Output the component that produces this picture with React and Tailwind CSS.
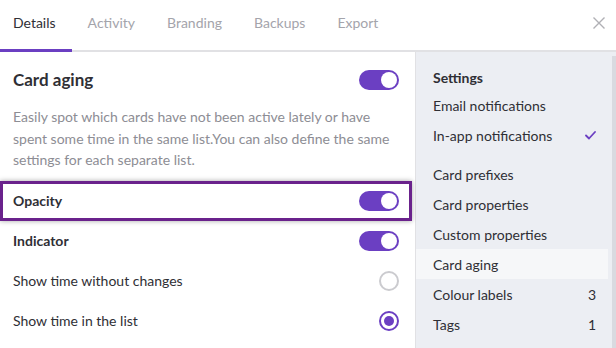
import { useState } from 'react';

const tabs = ['Details', 'Activity', 'Branding', 'Backups', 'Export'];

const menu = [
    { label: 'Email notifications' },
    { label: 'In-app notifications', check: true },
    { label: 'Card prefixes', gap: true },
    { label: 'Card properties' },
    { label: 'Custom properties' },
    { label: 'Card aging', active: true },
    { label: 'Colour labels', count: 3 },
    { label: 'Tags', count: 1 },
];

const Toggle = ({ on, onClick }) => (
    <button
        onClick={onClick}
        className={`w-[40px] h-[20px] rounded-full flex items-center px-[2px] shrink-0 ${on ? 'bg-[#6b3fc2] justify-end' : 'bg-[#cfcfd6] justify-start'}`}
    >
        <span className="w-[16px] h-[16px] rounded-full bg-white block" />
    </button>
);

const Radio = ({ on, onClick }) => (
    <button
        onClick={onClick}
        className={`w-[20px] h-[20px] rounded-full border-2 flex items-center justify-center shrink-0 ${on ? 'border-[#6b3fc2]' : 'border-[#cbcbcf]'}`}
    >
        {on && <span className="w-[10px] h-[10px] rounded-full bg-[#6b3fc2] block" />}
    </button>
);

const App = () => {
    const [aging, setAging] = useState(true);
    const [opacity, setOpacity] = useState(true);
    const [indicator, setIndicator] = useState(true);
    const [mode, setMode] = useState('list');

    return (
        <div className="w-[616px] h-[348px] bg-white overflow-hidden flex flex-col text-[#2f2f35]" style={{ fontFamily: 'Lato, "Open Sans", sans-serif' }}>
            {/* tabs */}
            <div className="flex items-end h-[52px] border-b-2 border-[#e1e1e4] shrink-0">
                {tabs.map((t, i) => (
                    <div
                        key={t}
                        className={`h-[52px] pt-[13px] text-[14px] leading-[20px] -mb-[2px] ${i === 0 ? 'pl-[13px] pr-[16px] border-b-[3px] border-[#6b3fc2] text-[#2f2f35]' : 'px-[16px] text-[#a4a4ab]'}`}
                    >
                        {t}
                    </div>
                ))}
                <div className="flex-1" />
                <button className="self-start mt-[17px] mr-[11px] text-[#b0b0b5]">
                    <svg width="12" height="12" viewBox="0 0 12 12" stroke="currentColor" strokeWidth="1.4" fill="none">
                        <path d="M0.5 0.5 L11.5 11.5 M11.5 0.5 L0.5 11.5" />
                    </svg>
                </button>
            </div>

            <div className="flex flex-1 min-h-0">
                {/* main panel */}
                <div className="w-[416px] shrink-0 border-r border-[#e1e1e4] pt-[18px]">
                    <div className="flex items-center justify-between pl-[13px] pr-[16px] h-[20px]">
                        <h2 className="text-[17px] font-bold leading-[20px]">Card aging</h2>
                        <Toggle on={aging} onClick={() => setAging(!aging)} />
                    </div>
                    <p className="mt-[16px] pl-[13px] pr-[16px] text-[14px] leading-[21.5px] text-[#8d8d94]">
                        Easily spot which cards have not been active lately or have spent some time in the same list.You can also define the same settings for each separate list.
                    </p>

                    <div className="mt-[10px] mr-[3px] h-[40px] flex items-center justify-between pl-[13px] pr-[13px] shadow-[inset_0_0_0_3px_#6a228c,0_0_5px_rgba(0,0,0,0.35)]">
                        <span className="text-[14px] font-bold">Opacity</span>
                        <Toggle on={opacity} onClick={() => setOpacity(!opacity)} />
                    </div>
                    <div className="h-[40px] flex items-center justify-between pl-[13px] pr-[16px]">
                        <span className="text-[14px] font-bold">Indicator</span>
                        <Toggle on={indicator} onClick={() => setIndicator(!indicator)} />
                    </div>
                    <div className="h-[40px] flex items-center justify-between pl-[13px] pr-[16px]">
                        <span className="text-[14px]">Show time without changes</span>
                        <Radio on={mode === 'changes'} onClick={() => setMode('changes')} />
                    </div>
                    <div className="h-[40px] flex items-center justify-between pl-[13px] pr-[16px]">
                        <span className="text-[14px]">Show time in the list</span>
                        <Radio on={mode === 'list'} onClick={() => setMode('list')} />
                    </div>
                </div>

                {/* settings sidebar */}
                <div className="flex-1 bg-[#eceef3] flex">
                    <div className="flex-1 pt-[16px] pr-[4px]">
                        <div className="px-[17px] h-[20px] text-[14px] leading-[20px] font-bold">Settings</div>
                        <div className="mt-[2px]">
                            {menu.map(m => (
                                <div
                                    key={m.label}
                                    className={`h-[30px] flex items-center justify-between pl-[17px] pr-[12px] text-[14px] ${m.gap ? 'mt-[9px]' : ''} ${m.active ? 'bg-[#f6f7f9]' : ''}`}
                                >
                                    <span>{m.label}</span>
                                    {m.check && (
                                        <svg width="11" height="9" viewBox="0 0 11 9" fill="none" stroke="#6b3fc2" strokeWidth="1.8" strokeLinecap="round" strokeLinejoin="round">
                                            <path d="M1 4.5 L4 7.5 L10 1" />
                                        </svg>
                                    )}
                                    {m.count && <span>{m.count}</span>}
                                </div>
                            ))}
                        </div>
                    </div>
                    <div className="w-[4px] mt-[4px] bg-[#d9dae0]" />
                </div>
            </div>
        </div>
    );
};

export default App;
